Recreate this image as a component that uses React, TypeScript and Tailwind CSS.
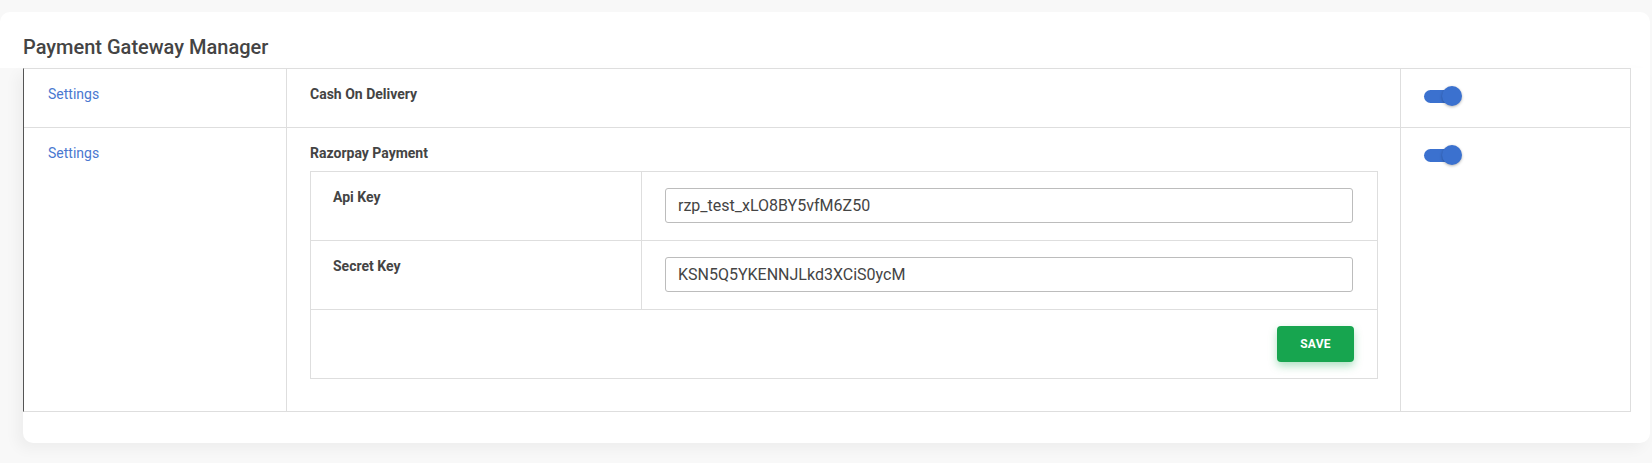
import React, {useState} from 'react';

interface Gateway {
  id: string;
  name: string;
  enabled: boolean;
  fields?: {label: string; value: string}[];
}

const GATEWAYS: Gateway[] = [
  {id: 'cod', name: 'Cash On Delivery', enabled: true},
  {
    id: 'razorpay',
    name: 'Razorpay Payment',
    enabled: true,
    fields: [
      {label: 'Api Key', value: 'rzp_test_xLO8BY5vfM6Z50'},
      {label: 'Secret Key', value: 'KSN5Q5YKENNJLkd3XCiS0ycM'},
    ],
  },
];

const Toggle: React.FC<{on: boolean; onChange: () => void}> = ({on, onChange}) => (
  <button onClick={onChange} className="relative w-[38px] h-[20px] block">
    <span
      className={`absolute left-0 top-[4px] w-[34px] h-[13px] rounded-full ${
        on ? 'bg-[#3b71cf]' : 'bg-[#c8c8c8]'
      }`}
    />
    <span
      className={`absolute top-0 w-[20px] h-[20px] rounded-full shadow-[0_1px_3px_rgba(0,0,0,0.3)] ${
        on ? 'right-0 bg-[#3b71cf]' : 'left-0 bg-[#f1f1f1]'
      }`}
    />
  </button>
);

const GatewayFields: React.FC<{fields: {label: string; value: string}[]}> = ({fields}) => {
  const [values, setValues] = useState(fields.map((f) => f.value));

  return (
    <div className="border border-[#dedede] mr-[22px]">
      {fields.map((field, i) => (
        <div key={field.label} className="grid grid-cols-[331px_1fr] border-b border-[#dedede] h-[69px]">
          <div className="border-r border-[#dedede] pl-[22px] pt-[15px] text-[14px] leading-[20px] font-bold text-[#444]">
            {field.label}
          </div>
          <div className="pl-[23px] pr-[24px] pt-[16px]">
            <input
              type="text"
              value={values[i]}
              onChange={(e) =>
                setValues((prev) => prev.map((v, j) => (j === i ? e.target.value : v)))
              }
              className="w-full h-[35px] border border-[#bcbcbc] rounded-[3px] px-3 text-[16px] text-[#444] outline-none"
            />
          </div>
        </div>
      ))}
      {/* Save row */}
      <div className="h-[68px] flex justify-end items-start pt-[16px] pr-[23px]">
        <button className="w-[77px] h-[36px] rounded-[4px] bg-[#17a54f] text-white text-[12px] font-bold tracking-[0.02em] shadow-[0_4px_9px_rgba(23,165,79,0.35)]">
          SAVE
        </button>
      </div>
    </div>
  );
};

const App: React.FC = () => {
  const [gateways, setGateways] = useState(GATEWAYS);

  const toggle = (id: string) => {
    setGateways((prev) => prev.map((g) => (g.id === id ? {...g, enabled: !g.enabled} : g)));
  };

  return (
    <div className="min-h-[463px] bg-[#f8f8f8] pt-[12px] pr-[2px] font-['Roboto','Liberation_Sans',sans-serif]">
      {/* Header */}
      <div className="bg-white rounded-t-[10px] h-[56px] pl-[23px] pt-[21px]">
        <h2 className="text-[20px] leading-[28px] font-medium text-[#444]">Payment Gateway Manager</h2>
      </div>

      {/* Body */}
      <div className="ml-[23px] bg-white rounded-b-[10px] pb-[31px] shadow-[-6px_6px_14px_rgba(0,0,0,0.045)]">
        <div className="border-t border-r border-b border-[#dedede] border-l border-l-[#555] mr-[19px]">
          {gateways.map((g, idx) => (
            <div
              key={g.id}
              className={`grid grid-cols-[263px_1fr_229px] ${
                idx < gateways.length - 1 ? 'border-b border-[#dedede]' : ''
              }`}
            >
              <div className="border-r border-[#dedede] pl-[24px] pt-[15px] text-[14px] leading-[20px]">
                <a href="#" className="text-[#4a78d0]">
                  Settings
                </a>
              </div>
              <div
                className={`border-r border-[#dedede] pl-[23px] pt-[15px] ${
                  g.fields ? 'pb-[32px]' : 'h-[58px]'
                }`}
              >
                <div className="text-[14px] leading-[20px] font-bold text-[#444]">{g.name}</div>
                {g.fields && (
                  <div className="mt-[8px]">
                    <GatewayFields fields={g.fields} />
                  </div>
                )}
              </div>
              <div className="pl-[23px] pt-[17px]">
                <Toggle on={g.enabled} onChange={() => toggle(g.id)} />
              </div>
            </div>
          ))}
        </div>
      </div>
    </div>
  );
};

export default App;
